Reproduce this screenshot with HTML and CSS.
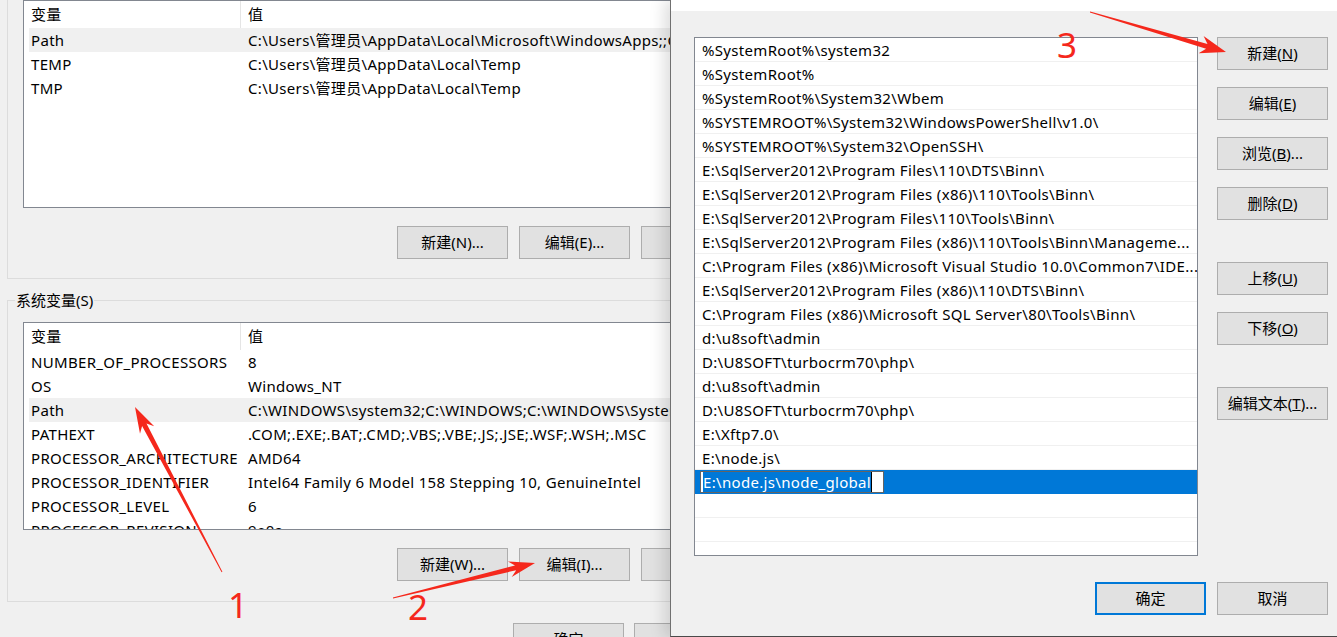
FILE: index.html
```html
<!DOCTYPE html>
<html lang="zh-CN">
<head>
    <meta charset="UTF-8">
    <meta name="viewport" content="width=device-width, initial-scale=1.0">
    <title>编辑环境变量</title>
    <link rel="stylesheet" href="styles.css">
</head>
<body>
<div class="desktop">

    <!-- back window: 环境变量 -->
    <div class="win env-win">
        <div class="group user-group">
            <div class="listview">
                <div class="lv-head"><span>变量</span><span>值</span></div>
                <div class="lv-row hot"><span>Path</span><span>C:\Users\管理员\AppData\Local\Microsoft\WindowsApps;;C:\Users\管理员\AppData\Roaming\npm</span></div>
                <div class="lv-row"><span>TEMP</span><span>C:\Users\管理员\AppData\Local\Temp</span></div>
                <div class="lv-row"><span>TMP</span><span>C:\Users\管理员\AppData\Local\Temp</span></div>
            </div>
            <div class="btn-row">
                <button>新建(N)...</button>
                <button>编辑(E)...</button>
                <button>删除(D)</button>
            </div>
        </div>

        <fieldset class="group sys-group">
            <legend>系统变量(S)</legend>
            <div class="listview">
                <div class="lv-head"><span>变量</span><span>值</span></div>
                <div class="lv-row"><span>NUMBER_OF_PROCESSORS</span><span>8</span></div>
                <div class="lv-row"><span>OS</span><span>Windows_NT</span></div>
                <div class="lv-row hot"><span>Path</span><span>C:\WINDOWS\system32;C:\WINDOWS;C:\WINDOWS\System32\Wbem;C:\WINDOWS\System32</span></div>
                <div class="lv-row"><span>PATHEXT</span><span>.COM;.EXE;.BAT;.CMD;.VBS;.VBE;.JS;.JSE;.WSF;.WSH;.MSC</span></div>
                <div class="lv-row"><span>PROCESSOR_ARCHITECTURE</span><span>AMD64</span></div>
                <div class="lv-row"><span>PROCESSOR_IDENTIFIER</span><span>Intel64 Family 6 Model 158 Stepping 10, GenuineIntel</span></div>
                <div class="lv-row"><span>PROCESSOR_LEVEL</span><span>6</span></div>
                <div class="lv-row"><span>PROCESSOR_REVISION</span><span>9e0a</span></div>
            </div>
            <div class="btn-row">
                <button>新建(W)...</button>
                <button>编辑(I)...</button>
                <button>删除(L)</button>
            </div>
        </fieldset>

        <div class="btn-row dialog-foot">
            <button>确定</button>
            <button>取消</button>
        </div>
    </div>

    <!-- front window: 编辑环境变量 -->
    <div class="win edit-win">
        <div class="edit-top"></div>
        <div class="edit-body">
            <div class="listbox">
                <div class="lb-item">%SystemRoot%\system32</div>
                <div class="lb-item">%SystemRoot%</div>
                <div class="lb-item">%SystemRoot%\System32\Wbem</div>
                <div class="lb-item">%SYSTEMROOT%\System32\WindowsPowerShell\v1.0\</div>
                <div class="lb-item">%SYSTEMROOT%\System32\OpenSSH\</div>
                <div class="lb-item">E:\SqlServer2012\Program Files\110\DTS\Binn\</div>
                <div class="lb-item">E:\SqlServer2012\Program Files (x86)\110\Tools\Binn\</div>
                <div class="lb-item">E:\SqlServer2012\Program Files\110\Tools\Binn\</div>
                <div class="lb-item">E:\SqlServer2012\Program Files (x86)\110\Tools\Binn\Manageme...</div>
                <div class="lb-item">C:\Program Files (x86)\Microsoft Visual Studio 10.0\Common7\IDE...</div>
                <div class="lb-item">E:\SqlServer2012\Program Files (x86)\110\DTS\Binn\</div>
                <div class="lb-item">C:\Program Files (x86)\Microsoft SQL Server\80\Tools\Binn\</div>
                <div class="lb-item">d:\u8soft\admin</div>
                <div class="lb-item">D:\U8SOFT\turbocrm70\php\</div>
                <div class="lb-item">d:\u8soft\admin</div>
                <div class="lb-item">D:\U8SOFT\turbocrm70\php\</div>
                <div class="lb-item">E:\Xftp7.0\</div>
                <div class="lb-item">E:\node.js\</div>
                <div class="lb-item sel"><span class="lb-edit"><span class="sel-text">E:\node.js\node_global</span></span></div>
                <div class="lb-item"></div>
                <div class="lb-item"></div>
                <div class="lb-item"></div>
            </div>
            <div class="side-buttons">
                <button>新建(<u>N</u>)</button>
                <button>编辑(<u>E</u>)</button>
                <button>浏览(<u>B</u>)...</button>
                <button>删除(<u>D</u>)</button>
                <button class="gap-before">上移(<u>U</u>)</button>
                <button>下移(<u>O</u>)</button>
                <button class="gap-before">编辑文本(<u>T</u>)...</button>
            </div>
            <div class="edit-foot">
                <button class="default">确定</button>
                <button>取消</button>
            </div>
        </div>
    </div>

    <!-- red annotations -->
    <svg class="marks" width="1337" height="637" viewBox="0 0 1337 637">
        <polygon points="135,407 154.2,426.3 146.5,423.5 222.4,571.8 221.6,572.2 142.1,425.9 140,433.7"/>
        <polygon points="535,563 511.7,577 516.2,570.2 393.1,598.5 392.9,597.5 515,565.4 507.9,561.4"/>
        <polygon points="1226,52 1198.6,53.3 1206.1,48.8 1089.9,12.5 1090.1,11.5 1207.5,44 1203.6,36.1"/>
    </svg>
    <span class="mark-num n1">1</span>
    <span class="mark-num n2">2</span>
    <span class="mark-num n3">3</span>

</div>
</body>
</html>
```

FILE: styles.css
```css
* {
    box-sizing: border-box;
}

body {
    margin: 0;
    font-family: "Noto Sans", "Noto Sans CJK SC", sans-serif;
    font-size: 15px;
    color: #000;
    background: #3b3b3b;
}

.desktop {
    position: relative;
    width: 1337px;
    height: 637px;
    overflow: hidden;
}

.win {
    position: absolute;
    top: 0;
    background: #f0f0f0;
}

button {
    font: inherit;
    width: 111px;
    height: 33px;
    padding: 0 0 2px;
    color: #000;
    background: #e1e1e1;
    border: 1px solid #adadad;
}

button.default {
    border: 2px solid #0078d7;
}

/* back window */
.env-win {
    left: 0;
    width: 776px;
    height: 637px;
}

.group {
    margin: 0 8px 0 7px;
    border: 1px solid #dcdcdc;
    padding: 0 15px 19px;
    min-width: 0;
}

.user-group {
    border-top: none;
}

.sys-group {
    margin-top: 11px;
    padding-top: 12px;
    padding-bottom: 20px;
}

.sys-group legend {
    margin-left: -8px;
    padding: 0 1px;
    line-height: 20px;
}

.listview {
    height: 208px;
    background: #fff;
    border: 1px solid #828790;
    overflow: hidden;
    letter-spacing: 0.32px;
}

.lv-head, .lv-row {
    display: grid;
    grid-template-columns: 217px 1fr;
}

.lv-head {
    height: 27px;
    line-height: 27px;
}

.lv-head span:first-child {
    border-right: 1px solid #e5e5e5;
}

.lv-row {
    height: 24px;
    line-height: 24px;
}

.lv-head span, .lv-row span {
    padding-left: 7px;
    white-space: nowrap;
    overflow: hidden;
}

.lv-row.hot {
    background: linear-gradient(to right, #fff 5px, #f0f0f0 5px);
}

.btn-row {
    display: flex;
    justify-content: flex-end;
    gap: 11px;
    margin-top: 18px;
}

.dialog-foot {
    margin-top: 21px;
    padding-right: 31px;
    gap: 10px;
}

/* front window */
.edit-win {
    left: 670px;
    width: 690px;
    height: 637px;
    border-left: 1px solid #707070;
    border-bottom: 1px solid #4a4a4a;
    box-shadow: -6px 0 14px rgba(0, 0, 0, 0.13);
}

.edit-top {
    height: 11px;
    background: #fff;
}

.edit-body {
    display: grid;
    grid-template-columns: 504px 111px;
    column-gap: 19px;
    row-gap: 26px;
    padding: 26px 0 0 23px;
}

.listbox {
    height: 519px;
    background: #fff;
    border: 1px solid #828790;
    overflow: hidden;
    letter-spacing: 0.32px;
}

.lb-item {
    height: 24px;
    line-height: 22px;
    padding: 1px 0 0 7px;
    border-bottom: 1px solid #f0f0f0;
    white-space: nowrap;
    overflow: hidden;
}

.lb-item.sel {
    background: #0078d7;
    border-bottom-color: #0078d7;
    padding-left: 5px;
}

.lb-edit {
    display: block;
    width: 184px;
    height: 22px;
    line-height: 20px;
    padding-left: 2px;
    background: #fff;
    border: 1px solid #646464;
}

.sel-text {
    color: #fff;
    background: #0078d7;
    border-right: 1px solid #000;
}

.side-buttons {
    display: flex;
    flex-direction: column;
    gap: 17px;
}

.side-buttons .gap-before {
    margin-top: 25px;
}

.edit-foot {
    grid-column: 1 / -1;
    display: flex;
    justify-content: flex-end;
    gap: 11px;
}

/* annotations */
.marks {
    position: absolute;
    left: 0;
    top: 0;
    pointer-events: none;
}

.marks polygon {
    fill: #f5281c;
}

.mark-num {
    position: absolute;
    width: 20px;
    text-align: center;
    font-family: "Noto Sans", sans-serif;
    font-size: 35px;
    line-height: 35px;
    color: #f5281c;
}

.n1 {
    left: 228px;
    top: 587px;
}

.n2 {
    left: 408px;
    top: 589px;
}

.n3 {
    left: 1057px;
    top: 27px;
}
```
